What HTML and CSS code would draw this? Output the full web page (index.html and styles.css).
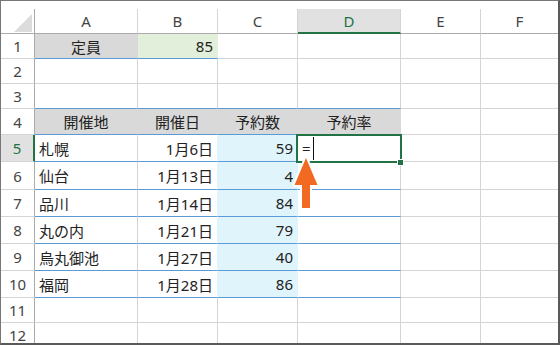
FILE: index.html
```html
<!DOCTYPE html>
<html lang="ja">
<head>
    <meta charset="UTF-8">
    <title>予約率</title>
    <link rel="stylesheet" href="styles.css">
</head>
<body>
    <div class="sheet">
        <div class="bar"></div>
        <div class="grid">
            <!-- column headers -->
            <div class="c corner"><svg width="18" height="18" viewBox="0 0 18 18"><polygon points="18,0 18,18 0,18" fill="#dcdcdc"/></svg></div>
            <div class="c hd">A</div>
            <div class="c hd">B</div>
            <div class="c hd">C</div>
            <div class="c hd hd-sel">D</div>
            <div class="c hd">E</div>
            <div class="c hd last">F</div>

            <div class="c rh">1</div>
            <div class="c gray ctr blue-b">定員</div>
            <div class="c green r blue-b">85</div>
            <div class="c"></div>
            <div class="c"></div>
            <div class="c"></div>
            <div class="c last"></div>

            <div class="c rh">2</div>
            <div class="c"></div>
            <div class="c"></div>
            <div class="c"></div>
            <div class="c"></div>
            <div class="c"></div>
            <div class="c last"></div>

            <div class="c rh">3</div>
            <div class="c blue-b"></div>
            <div class="c blue-b"></div>
            <div class="c blue-b"></div>
            <div class="c blue-b"></div>
            <div class="c"></div>
            <div class="c last"></div>

            <div class="c rh">4</div>
            <div class="c gray ctr blue-b">開催地</div>
            <div class="c gray ctr blue-b">開催日</div>
            <div class="c gray ctr blue-b">予約数</div>
            <div class="c gray ctr blue-b">予約率</div>
            <div class="c"></div>
            <div class="c last"></div>

            <div class="c rh rh-sel">5</div>
            <div class="c l blue-b">札幌</div>
            <div class="c r blue-b to-cyan">1月6日</div>
            <div class="c cyan r blue-b">59</div>
            <div class="c active blue-b">
                <span class="eq">=</span><span class="caret"></span>
                <div class="cell-cursor"><i class="handle"></i></div>
            </div>
            <div class="c"></div>
            <div class="c last"></div>

            <div class="c rh">6</div>
            <div class="c l blue-b">仙台</div>
            <div class="c r blue-b to-cyan">1月13日</div>
            <div class="c cyan r blue-b">4</div>
            <div class="c blue-b"></div>
            <div class="c"></div>
            <div class="c last"></div>

            <div class="c rh">7</div>
            <div class="c l blue-b">品川</div>
            <div class="c r blue-b to-cyan">1月14日</div>
            <div class="c cyan r blue-b">84</div>
            <div class="c blue-b"></div>
            <div class="c"></div>
            <div class="c last"></div>

            <div class="c rh">8</div>
            <div class="c l blue-b">丸の内</div>
            <div class="c r blue-b to-cyan">1月21日</div>
            <div class="c cyan r blue-b">79</div>
            <div class="c blue-b"></div>
            <div class="c"></div>
            <div class="c last"></div>

            <div class="c rh">9</div>
            <div class="c l blue-b">烏丸御池</div>
            <div class="c r blue-b to-cyan">1月27日</div>
            <div class="c cyan r blue-b">40</div>
            <div class="c blue-b"></div>
            <div class="c"></div>
            <div class="c last"></div>

            <div class="c rh">10</div>
            <div class="c l blue-b">福岡</div>
            <div class="c r blue-b to-cyan">1月28日</div>
            <div class="c cyan r blue-b">86</div>
            <div class="c blue-b"></div>
            <div class="c"></div>
            <div class="c last"></div>

            <div class="c rh">11</div>
            <div class="c"></div>
            <div class="c"></div>
            <div class="c"></div>
            <div class="c"></div>
            <div class="c"></div>
            <div class="c last"></div>

            <div class="c rh">12</div>
            <div class="c"></div>
            <div class="c"></div>
            <div class="c"></div>
            <div class="c"></div>
            <div class="c"></div>
            <div class="c last"></div>
        </div>

        <!-- arrow pointing at the input cell -->
        <svg class="arrow" width="34" height="64" viewBox="0 0 34 64">
            <polygon points="16,8 27.5,35 20,35 20,58 12,58 12,35 4.5,35" fill="#f26a21" stroke="#fff" stroke-width="4" stroke-linejoin="round" paint-order="stroke"/>
        </svg>
    </div>
</body>
</html>
```

FILE: styles.css
```css
* {
    margin: 0;
    padding: 0;
    box-sizing: border-box;
}
body {
    background: #fff;
    font-family: "Noto Sans", "Noto Sans CJK JP", sans-serif;
    font-size: 15px;
    color: #222;
}
.sheet {
    position: relative;
    width: 560px;
    height: 345px;
    overflow: hidden;
    border-top: 1px solid #777;
    border-left: 1px solid #777;
    border-right: 2px solid #5a5a5a;
    border-bottom: 2px solid #5a5a5a;
}
.bar {
    height: 8px;
}
.grid {
    display: grid;
    grid-template-columns: 34px 103px 80px 80px 103px 80px 77px;
    grid-template-rows: 25px 25px 25px 25px 26px 27px 28px 27px 27px 27px 27px 25px 25px;
}
.c {
    display: flex;
    align-items: center;
    border-right: 1px solid #d4d4d4;
    border-bottom: 1px solid #d4d4d4;
    white-space: nowrap;
}
.c.last {
    border-right: none;
}

/* headers */
.corner {
    justify-content: flex-end;
    align-items: flex-end;
    padding: 0 2px 1px 0;
    border-right-color: #ababab;
    border-bottom-color: #ababab;
}
.corner svg {
    display: block;
}
.hd {
    justify-content: center;
    color: #444;
    border-bottom-color: #ababab;
}
.hd-sel {
    background: #e1e1e1;
    color: #217346;
    border-bottom: 2px solid #217346;
}
.rh {
    justify-content: center;
    color: #444;
    border-right-color: #ababab;
}
.rh-sel {
    background: #e1e1e1;
    color: #217346;
    border-right: 2px solid #217346;
}

/* alignment */
.ctr {
    justify-content: center;
}
.l {
    padding-left: 4px;
}
.r {
    justify-content: flex-end;
    padding-right: 4px;
}

/* fills and borders */
.gray {
    background: #d9d9d9;
    border-right-color: #d9d9d9;
}
.green {
    background: #e2efda;
    border-right-color: #e2efda;
}
.cyan {
    background: #e0f4fb;
    border-right-color: #e0f4fb;
}
.to-cyan {
    border-right-color: #e0f4fb;
}
.blue-b {
    border-bottom-color: #5b9bd5;
}

/* active cell */
.active {
    position: relative;
    padding-left: 4px;
    align-items: stretch;
}
.eq {
    align-self: center;
}
.caret {
    width: 1px;
    height: 23px;
    margin: 2px 0 0 2px;
    background: #111;
}
.cell-cursor {
    position: absolute;
    left: -2px;
    top: -1px;
    width: 106px;
    height: 29px;
    border: 2px solid #217346;
}
.handle {
    position: absolute;
    left: 99px;
    top: 23px;
    width: 7px;
    height: 7px;
    background: #217346;
    border: 1px solid #fff;
}
.arrow {
    position: absolute;
    left: 289px;
    top: 149px;
}
```
